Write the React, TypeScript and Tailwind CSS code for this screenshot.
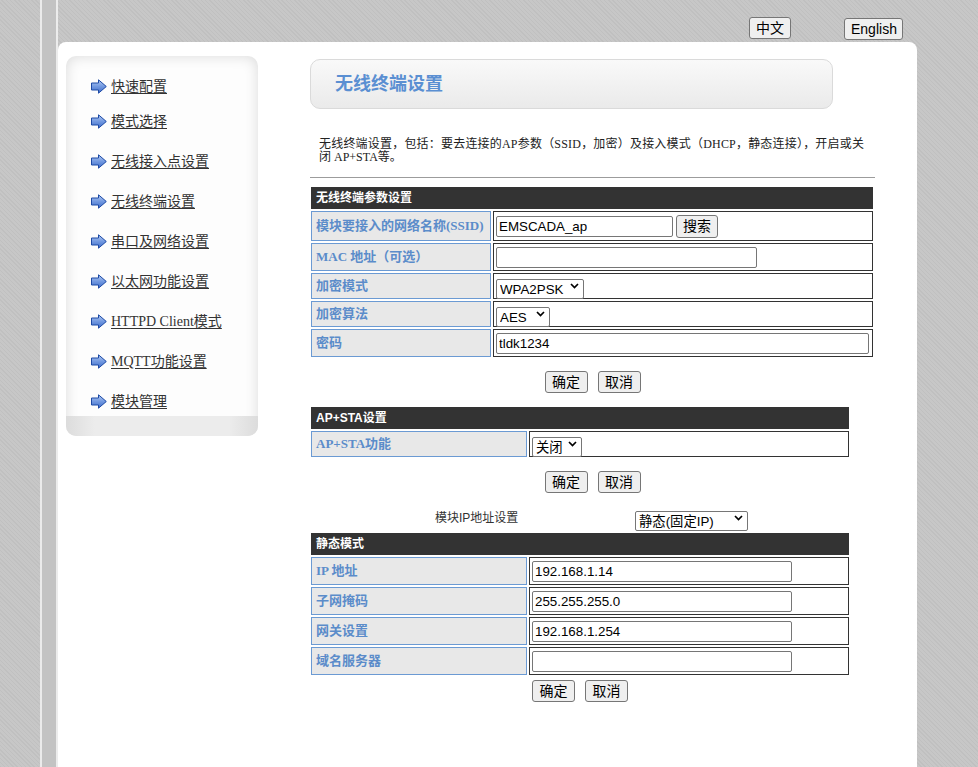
import type { ReactNode } from "react";

const MENU = [
  "快速配置",
  "模式选择",
  "无线接入点设置",
  "无线终端设置",
  "串口及网络设置",
  "以太网功能设置",
  "HTTPD Client模式",
  "MQTT功能设置",
  "模块管理",
];

const SERIF = "font-['Liberation_Serif','Noto_Sans_CJK_SC',serif]";
const SANS = "font-['Liberation_Sans','Noto_Sans_CJK_SC',sans-serif]";

function Arrow() {
  return (
    <svg width="16" height="15" viewBox="0 0 16 15" className="shrink-0">
      <defs>
        <linearGradient id="arr" x1="0" y1="0" x2="0" y2="1">
          <stop offset="0" stopColor="#b4cbf2" />
          <stop offset="0.5" stopColor="#7198e0" />
          <stop offset="1" stopColor="#3f6cc8" />
        </linearGradient>
      </defs>
      <path d="M0.5 4 H7.5 V0.8 L15.3 7.5 L7.5 14.2 V11 H0.5 Z" fill="url(#arr)" stroke="#1d4aa6" strokeWidth="1" />
    </svg>
  );
}

function Btn({ children, className = "" }: { children: ReactNode; className?: string }) {
  return (
    <button
      type="button"
      className={`h-[22px] rounded-[3px] border border-[#767676] bg-[#efefef] px-[6px] text-[14px] leading-none text-black ${SANS} ${className}`}
    >
      {children}
    </button>
  );
}

function TextInput({ value, w }: { value: string; w: string }) {
  return (
    <input
      readOnly
      value={value}
      className={`h-[21px] ${w} rounded-[2px] border border-[#767676] bg-white px-[2px] text-[13.33px] text-black outline-none ${SANS}`}
    />
  );
}

function Select({ value, w }: { value: string; w: string }) {
  return (
    <div className={`relative h-[20px] ${w}`}>
      <select
        value={value}
        onChange={() => {}}
        className={`h-full w-full appearance-none rounded-[2px] border border-[#767676] bg-white pl-[3px] text-[13.33px] text-black outline-none ${SANS}`}
      >
        <option>{value}</option>
      </select>
      <svg
        width="9"
        height="6"
        viewBox="0 0 9 6"
        className="pointer-events-none absolute right-[5px] top-[7px]"
      >
        <path d="M1 1 L4.5 4.5 L8 1" fill="none" stroke="#000" strokeWidth="1.7" />
      </svg>
    </div>
  );
}

type Row = { label: ReactNode; h: string; content: ReactNode };

function FormTable({
  title,
  width,
  labelW,
  rows,
}: {
  title: string;
  width: string;
  labelW: string;
  rows: Row[];
}) {
  return (
    <div className={`ml-[1px] flex ${width} flex-col gap-[2px]`}>
      <div className={`flex h-[22px] items-center bg-[#333333] pl-[5px] text-[12px] font-bold text-white ${SANS}`}>
        {title}
      </div>
      {rows.map((r, i) => (
        <div key={i} className={`flex ${r.h} gap-[2px]`}>
          <div
            className={`flex ${labelW} shrink-0 items-center border border-[#6b9ad3] bg-[#e8e8e8] pl-[4px] text-[13px] font-bold text-[#5b8cca] ${SERIF}`}
          >
            {r.label}
          </div>
          <div className="flex flex-1 items-center gap-[3px] border border-[#333333] pl-[2px]">{r.content}</div>
        </div>
      ))}
    </div>
  );
}

function Sidebar() {
  return (
    <nav className="flex h-[380px] w-[192px] shrink-0 flex-col overflow-hidden rounded-[10px] bg-[#fdfdfd] shadow-[inset_0_0_14px_rgba(0,0,0,0.14)]">
      <div className="flex flex-1 flex-col pt-[20px]">
        {MENU.map((m, i) => (
          <a
            key={m}
            href="#"
            className={`flex h-[20px] items-center pl-[25px] ${i === 0 ? "" : i === 1 ? "mt-[15px]" : "mt-[20px]"}`}
          >
            <Arrow />
            <span className={`ml-[4px] text-[14px] text-[#333333] underline underline-offset-2 ${SERIF}`}>{m}</span>
          </a>
        ))}
      </div>
      <div className="h-[20px] bg-[linear-gradient(to_right,#dcdcdc,#ececec_15%,#ececec_85%,#dcdcdc)]" />
    </nav>
  );
}

export default function App() {
  const pattern =
    "bg-[#c4c4c4] bg-[image:repeating-linear-gradient(45deg,#c0c0c0_0px,#c0c0c0_1px,#c7c7c7_1px,#c7c7c7_3px)]";

  return (
    <div className={`flex h-[767px] w-full overflow-hidden ${pattern}`}>
      <div className="w-[40px] shrink-0" />
      <div className="w-[2px] shrink-0 bg-[#ebebeb]" />
      <div className="w-[14px] shrink-0 bg-[#c3c3c3]" />
      <div className="w-[2px] shrink-0 bg-[#ececec]" />
      <div className="flex w-[859px] shrink-0 flex-col">
        <div className="flex h-[42px] shrink-0 items-start pl-[691px] pt-[17px]">
          <Btn className="h-[21px] w-[42px] px-0">中文</Btn>
          <Btn className="ml-[53px] mt-[1px] h-[20px] w-[59px] px-0">English</Btn>
        </div>
        <div className="flex flex-1 rounded-t-[8px] bg-white pl-[8px] pt-[14px]">
          <Sidebar />
          <main className="ml-[52px] mt-[3px] flex w-[565px] flex-col">
            <div className="flex h-[50px] w-[523px] items-center rounded-[10px] border border-[#dadada] bg-[linear-gradient(to_bottom,#f9f9f9,#eaeaea)] pl-[24px]">
              <h1 className={`text-[18px] font-bold text-[#5a8fd2] ${SANS}`}>无线终端设置</h1>
            </div>
            <p className={`mt-[29px] pl-[9px] text-[12px] leading-[13px] text-[#222222] ${SERIF}`}>
              <span className="whitespace-nowrap tracking-[0.2px]">
                无线终端设置，包括：要去连接的AP参数（SSID，加密）及接入模式（DHCP，静态连接），开启或关
              </span>
              <br />
              <span className="whitespace-nowrap">闭 AP+STA等。</span>
            </p>
            <div className="mt-[13px] border-t border-[#9c9c9c]" />

            <div className="mt-[9px]">
              <FormTable
                title="无线终端参数设置"
                width="w-[562px]"
                labelW="w-[180px]"
                rows={[
                  {
                    label: "模块要接入的网络名称(SSID)",
                    h: "h-[30px]",
                    content: (
                      <>
                        <TextInput value="EMSCADA_ap" w="w-[177px]" />
                        <Btn className="h-[23px] w-[42px] px-0">搜索</Btn>
                      </>
                    ),
                  },
                  { label: "MAC 地址（可选）", h: "h-[28px]", content: <TextInput value="" w="w-[261px]" /> },
                  { label: "加密模式", h: "h-[26px]", content: <Select value="WPA2PSK" w="w-[88px]" /> },
                  { label: "加密算法", h: "h-[26px]", content: <Select value="AES" w="w-[54px]" /> },
                  { label: "密码", h: "h-[28px]", content: <TextInput value="tldk1234" w="w-[373px]" /> },
                ]}
              />
            </div>
            <div className="mt-[14px] flex justify-center gap-[10px]">
              <Btn className="w-[43px] px-0">确定</Btn>
              <Btn className="w-[43px] px-0">取消</Btn>
            </div>

            <div className="mt-[14px]">
              <FormTable
                title="AP+STA设置"
                width="w-[538px]"
                labelW="w-[216px]"
                rows={[{ label: "AP+STA功能", h: "h-[26px]", content: <Select value="关闭" w="w-[50px]" /> }]}
              />
            </div>
            <div className="mt-[14px] flex justify-center gap-[10px]">
              <Btn className="w-[43px] px-0">确定</Btn>
              <Btn className="w-[43px] px-0">取消</Btn>
            </div>

            <div className="mt-[14px] flex h-[22px] items-center">
              <span className={`w-[325px] pl-[125px] text-[12px] text-[#333333] ${SANS}`}>模块IP地址设置</span>
              <Select value="静态(固定IP)" w="w-[113px]" />
            </div>

            <div className="mt-[4px]">
              <FormTable
                title="静态模式"
                width="w-[538px]"
                labelW="w-[216px]"
                rows={[
                  { label: "IP 地址", h: "h-[28px]", content: <TextInput value="192.168.1.14" w="w-[260px]" /> },
                  { label: "子网掩码", h: "h-[28px]", content: <TextInput value="255.255.255.0" w="w-[260px]" /> },
                  { label: "网关设置", h: "h-[28px]", content: <TextInput value="192.168.1.254" w="w-[260px]" /> },
                  { label: "域名服务器", h: "h-[28px]", content: <TextInput value="" w="w-[260px]" /> },
                ]}
              />
            </div>
            <div className="mt-[5px] flex w-[540px] justify-center gap-[10px]">
              <Btn className="w-[43px] px-0">确定</Btn>
              <Btn className="w-[43px] px-0">取消</Btn>
            </div>
          </main>
        </div>
      </div>
      <div className="flex-1" />
    </div>
  );
}
